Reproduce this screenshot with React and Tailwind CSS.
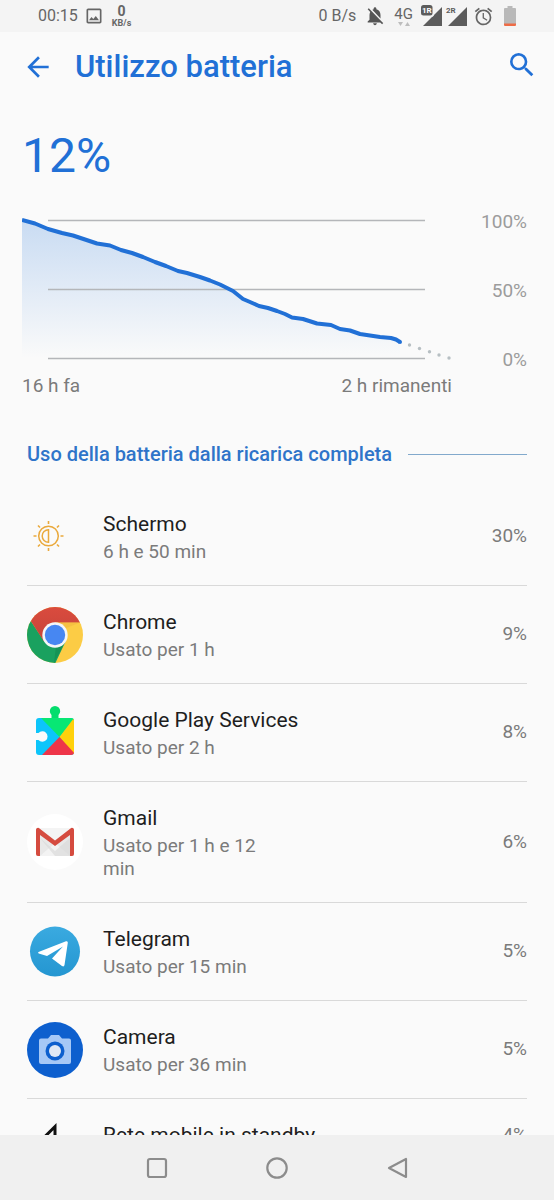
import { MdAlarm, MdArrowBack, MdNotificationsOff, MdOutlineImage, MdSearch } from "react-icons/md";

function StatusBar() {
  return (
    <div className="flex h-8 shrink-0 items-center justify-between bg-[#f4f4f4] pr-[38px] pl-[38px] text-base text-[#666666]">
      <div className="flex items-center">
        <span>00:15</span>
        <MdOutlineImage className="ml-1.5 size-5" />
        <div className="ml-2 flex flex-col items-center font-bold">
          <span className="text-sm leading-[14px]">0</span>
          <span className="text-[9px] leading-[10px]">KB/s</span>
        </div>
      </div>
      <div className="flex items-center">
        <span>0 B/s</span>
        <MdNotificationsOff className="ml-2 size-[22px] text-[#555555]" />
        <div className="ml-2 flex flex-col items-center">
          <span className="text-[15px] leading-4">4G</span>
          <svg className="h-1 w-3" viewBox="0 0 12 4" fill="#bdbdbd" aria-hidden="true">
            <path d="M0 0h5L2.500 4zM7 4h5L9.500 0z" />
          </svg>
        </div>
        <svg className="ml-2 h-[22px] w-[46px]" viewBox="0 0 46 22" aria-hidden="true">
          <path d="M21 2v19H2zM46 2v19H27z" fill="#5c5c5c" />
          <rect x="-1" y="-1" width="14" height="13" rx="3" fill="#f4f4f4" />
          <rect x="0" y="0" width="11.500" height="10.500" rx="2.500" fill="#5c5c5c" />
          <text x="1" y="8" fontSize="8" fontWeight="700" fill="#ffffff">1R</text>
          <text x="25" y="8" fontSize="8" fontWeight="700" fill="#5c5c5c">2R</text>
        </svg>
        <MdAlarm className="ml-1.5 size-[21px]" />
        <svg className="ml-2.5 h-5 w-3" viewBox="0 0 12 20" aria-hidden="true">
          <path d="M3.500 0h5v2H11a1 1 0 0 1 1 1v15H0V3a1 1 0 0 1 1-1h2.500z" fill="#b9b9b9" />
          <path d="M0 17.500h12V19a1 1 0 0 1-1 1H1a1 1 0 0 1-1-1z" fill="#ee6c46" />
        </svg>
      </div>
    </div>
  );
}

const LEVELS =
  "22,220 35,223.500 48,229 62,233 73,235.500 85,239.500 97,243.500 110,245.500 121,250 132,253 143,257 155,262 166,266 178,271 187,273 200,277 210,280.500 220,284.500 233,291 243,299 250,302 259,306 268,308 277,311 285,314 292,317.500 303,319 317,323.500 331,325 340,329 350,330.500 360,334 380,337 391,338 396,339.500 400,342";
const FORECAST = [[409.5, 345], [419.5, 348.5], [429.5, 351.7], [439, 355], [449, 358]];

function BatteryChart() {
  return (
    <section aria-label="Livello batteria" className="pt-2 pr-[27px] pl-[22px]">
      <div className="flex">
        <div className="min-w-0 flex-1">
          <svg className="block w-full" viewBox="22 210 430 162" aria-hidden="true">
            <defs>
              <linearGradient id="level-fill" x1="0" y1="220" x2="0" y2="358" gradientUnits="userSpaceOnUse">
                <stop offset="0" stopColor="#1a6fd8" stopOpacity="0.22" />
                <stop offset="1" stopColor="#1a6fd8" stopOpacity="0" />
              </linearGradient>
            </defs>
            <polygon points={`${LEVELS} 400,358 22,358`} fill="url(#level-fill)" />
            <path d="M48 220.500h377M48 289.500h377M48 358.500h377" stroke="#b4b6b9" strokeWidth="1.300" />
            <polyline points={LEVELS} fill="none" stroke="#2170d6" strokeWidth="4" strokeLinejoin="round" />
            <circle cx="400" cy="342" r="2" fill="#2170d6" />
            {FORECAST.map(([x, y]) => (
              <circle key={x} cx={x} cy={y} r="1.7" fill="#b7bfc3" />
            ))}
          </svg>
          <div className="flex justify-between text-[19px] leading-7 text-[#7b7b7b]">
            <span>16 h fa</span>
            <span>2 h rimanenti</span>
          </div>
        </div>
        <div className="mb-7 flex w-[75px] flex-col justify-between text-right text-[19px] leading-6 text-[#9c9c9c]">
          <span>100%</span>
          <span>50%</span>
          <span>0%</span>
        </div>
      </div>
    </section>
  );
}

function ScreenIcon() {
  return (
    <svg className="size-full" viewBox="0 0 56 56" fill="none" stroke="#eaa93c" aria-hidden="true">
      <circle cx="21.500" cy="27" r="9.800" strokeWidth="1.500" />
      <path d="M21.500 20.700a6.300 6.300 0 0 0 0 12.600z" strokeWidth="1.500" />
      <path d="M21.500 12v3M21.500 39v3M6.500 27h3M33.500 27h3M11 16.500l2 2M30 35.500l2 2M32 16.500l-2 2M13 35.500l-2 2" strokeWidth="1.600" />
    </svg>
  );
}

function ChromeIcon() {
  return (
    <svg className="size-full" viewBox="0 0 56 56" aria-hidden="true">
      <defs>
        <linearGradient id="chrome-red" x1="0" y1="0" x2="0" y2="1">
          <stop offset="0" stopColor="#da4b3e" />
          <stop offset="1" stopColor="#c5443a" />
        </linearGradient>
        <clipPath id="chrome-disc"><circle cx="28" cy="28" r="28" /></clipPath>
      </defs>
      <g clipPath="url(#chrome-disc)">
        <path d="M0 0h56v56H0z" fill="#fccc45" />
        <path d="M3.800 14L-3 14v45h30l12-25.500L28 38 17 34z" fill="#1aa15f" />
        <path d="M3.800 14L-2 0h60v15.500H28L17 34.500z" fill="url(#chrome-red)" />
        <path d="M28 15.500h25l-15 6z" fill="#f0b440" opacity="0.500" />
        <path d="M27 56l11.500-22-9.500 5z" fill="#128b4e" opacity="0.600" />
      </g>
      <circle cx="28" cy="28" r="12.700" fill="#f5f6f7" />
      <circle cx="28" cy="28" r="10.200" fill="#4787f2" />
    </svg>
  );
}

function PlayServicesIcon() {
  return (
    <svg className="size-full" viewBox="0 0 56 56" aria-hidden="true">
      <defs>
        <clipPath id="puzzle"><rect x="9" y="13" width="38" height="37" rx="3" /></clipPath>
      </defs>
      <path d="M24.500 14v-4a5.200 5.200 0 1 1 7 0v4z" fill="#05dd6d" />
      <g clipPath="url(#puzzle)">
        <path d="M9 13h38v37H9z" fill="#0cc5fa" />
        <path d="M14 13h34L32.500 32z" fill="#08e774" />
        <path d="M47 13v37L32.500 32z" fill="#ffd10b" />
        <path d="M15 50L32.500 32 49 50z" fill="#ee3549" />
      </g>
      <path d="M8 28h3.500a5.200 5.200 0 1 1 0 7H8z" fill="#fafafa" />
    </svg>
  );
}

function GmailIcon() {
  return (
    <svg className="size-full" viewBox="0 0 56 56" aria-hidden="true">
      <circle cx="28" cy="28" r="28" fill="#ffffff" />
      <rect x="9" y="14" width="38" height="28" rx="2" fill="#e8e8e8" />
      <path d="M13 42l15-13 15 13z" fill="#f3f3f3" />
      <path d="M13 24l15 13 15-13v18H28z" fill="#d7d7d7" opacity="0.600" />
      <path d="M11 14h34L28 28z" fill="#f4f4f4" />
      <path d="M9 16a2 2 0 0 1 3.500-1.500L28 26.500l15.500-12A2 2 0 0 1 47 16v24a2 2 0 0 1-2 2h-2V21L28 32 13 21v21h-2a2 2 0 0 1-2-2z" fill="#d54b3f" />
    </svg>
  );
}

function TelegramIcon() {
  return (
    <svg className="size-full" viewBox="0 0 56 56" aria-hidden="true">
      <defs>
        <linearGradient id="telegram-sky" x1="0" y1="0" x2="0" y2="1">
          <stop offset="0" stopColor="#3aaae0" />
          <stop offset="1" stopColor="#2496d1" />
        </linearGradient>
      </defs>
      <circle cx="28" cy="27.500" r="25" fill="url(#telegram-sky)" />
      <path d="M11.500 28L39 17.300q2-.6 1.800 1.500L37.500 41q-.5 2.300-2.500 1l-10-7.500L36 22.500 20 32l-8.300-2.500q-1.200-.7-.2-1.500z" fill="#ffffff" />
    </svg>
  );
}

function CameraIcon() {
  return (
    <svg className="size-full" viewBox="0 0 56 56" aria-hidden="true">
      <circle cx="28" cy="28" r="28" fill="#0d5fce" />
      <path d="M14 16.500h7l3-3.500h8l3 3.500h7a2 2 0 0 1 2 2V40a2 2 0 0 1-2 2H14a2 2 0 0 1-2-2V18.500a2 2 0 0 1 2-2z" fill="#a6c8f6" />
      <circle cx="28" cy="29" r="9.500" fill="#0d5fce" />
      <circle cx="28" cy="29" r="6" fill="#dfe8f5" />
    </svg>
  );
}

function NetworkIcon() {
  return (
    <svg className="size-full" viewBox="0 0 56 56" fill="none" aria-hidden="true">
      <path d="M28 19.500V42H5.500z" stroke="#111111" strokeWidth="3" />
    </svg>
  );
}

const APPS = [
  { name: "Schermo", usage: "6 h e 50 min", share: "30%", Icon: ScreenIcon },
  { name: "Chrome", usage: "Usato per 1 h", share: "9%", Icon: ChromeIcon },
  { name: "Google Play Services", usage: "Usato per 2 h", share: "8%", Icon: PlayServicesIcon },
  { name: "Gmail", usage: "Usato per 1 h e 12 min", share: "6%", Icon: GmailIcon },
  { name: "Telegram", usage: "Usato per 15 min", share: "5%", Icon: TelegramIcon },
  { name: "Camera", usage: "Usato per 36 min", share: "5%", Icon: CameraIcon },
  { name: "Rete mobile in standby", share: "4%", Icon: NetworkIcon },
];

function AppRow({ name, usage, share, Icon }) {
  return (
    <li className="flex items-center border-b border-[#d9d9d9]">
      <div className="size-14 shrink-0">
        <Icon />
      </div>
      <div className="ml-5 min-w-0 flex-1 py-[22px]">
        <h3 className="text-[21px] leading-7 text-[#1e1e1e]">{name}</h3>
        {usage && (
          <p className="mt-0.5 max-w-[180px] text-[19px] leading-[23px] text-[#7b7b7b]">{usage}</p>
        )}
      </div>
      <span className="text-[19px] text-[#7b7b7b]">{share}</span>
    </li>
  );
}

function NavBar() {
  return (
    <nav className="flex h-[65px] shrink-0 items-center justify-center gap-24 bg-[#f0f0f0]">
      <button type="button" aria-label="Recenti">
        <svg className="size-6" viewBox="0 0 24 24" fill="none" stroke="#8c8c8c" strokeWidth="2.200">
          <rect x="3" y="3" width="18" height="18" rx="2" />
        </svg>
      </button>
      <button type="button" aria-label="Home">
        <svg className="size-6" viewBox="0 0 24 24" fill="none" stroke="#8c8c8c" strokeWidth="2.200">
          <circle cx="12" cy="12" r="9.700" />
        </svg>
      </button>
      <button type="button" aria-label="Indietro">
        <svg className="size-6" viewBox="0 0 24 24" fill="none" stroke="#8c8c8c" strokeWidth="2.200" strokeLinejoin="round">
          <path d="M21 3v18L4 12z" />
        </svg>
      </button>
    </nav>
  );
}

export default function App() {
  return (
    <div className="flex h-screen flex-col bg-[#fafafa] font-[Roboto,sans-serif]">
      <StatusBar />
      <header className="flex h-[70px] shrink-0 items-center pr-4 pl-[22px] text-[#2170d6]">
        <button type="button" aria-label="Torna indietro">
          <MdArrowBack className="size-8" />
        </button>
        <h1 className="ml-[21px] flex-1 text-[31px] font-medium">Utilizzo batteria</h1>
        <button type="button" aria-label="Cerca" className="pb-1">
          <MdSearch className="size-8" />
        </button>
      </header>
      <main className="min-h-0 flex-1 overflow-hidden">
        <p className="pt-6 pl-[22px] text-5xl leading-[60px] text-[#2170d6]">12%</p>
        <div className="pt-4">
          <BatteryChart />
        </div>
        <div className="mt-10 flex items-center gap-4 px-[27px]">
          <h2 className="text-xl leading-7 font-medium text-[#2f74c9]">Uso della batteria dalla ricarica completa</h2>
          <div className="h-px flex-1 bg-[#82a9cc]" />
        </div>
        <ul className="mt-5 px-[27px]">
          {APPS.map((app) => (
            <AppRow key={app.name} {...app} />
          ))}
        </ul>
      </main>
      <NavBar />
    </div>
  );
}
